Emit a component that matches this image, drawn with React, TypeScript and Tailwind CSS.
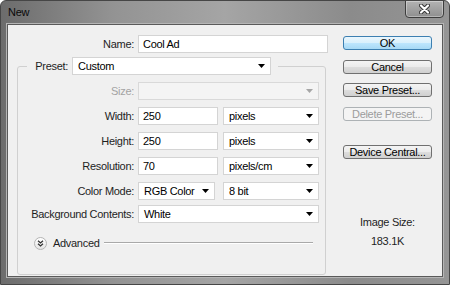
import React from "react";

const font = "font-['Liberation_Sans',Arial,sans-serif]";

function Arrow({ disabled }: { disabled?: boolean }) {
  return (
    <svg width="7" height="4" viewBox="0 0 7 4" className="shrink-0">
      <polygon points="0,0 7,0 3.5,4" fill={disabled ? "#a6a6a6" : "#000"} />
    </svg>
  );
}

function Select({ value, w, disabled }: { value?: string; w: string; disabled?: boolean }) {
  return (
    <div
      className={`${w} h-[18px] flex items-center justify-between pl-[5px] pr-[5px] border ${
        disabled ? "bg-[#f4f4f4] border-[#d9d9d9]" : "bg-white border-[#d4d4d4]"
      }`}
    >
      <span className="leading-none">{value}</span>
      <Arrow disabled={disabled} />
    </div>
  );
}

function Input({ value, w }: { value: string; w: string }) {
  return (
    <div className={`${w} h-[18px] flex items-center pl-[4px] bg-white border border-[#d4d4d4]`}>
      <span className="leading-none">{value}</span>
    </div>
  );
}

function Row({ label, disabled, children }: { label: string; disabled?: boolean; children: React.ReactNode }) {
  return (
    <div className="flex items-center gap-[4px]">
      <span className={`w-[116px] text-right ${disabled ? "text-[#a3a3a3]" : "text-[#1e1e1e]"}`}>{label}</span>
      {children}
    </div>
  );
}

function Btn({ children, primary, disabled }: { children: React.ReactNode; primary?: boolean; disabled?: boolean }) {
  let cls = "border-[#707070] bg-[linear-gradient(#f4f4f4,#ebebeb_50%,#dddddd_51%,#d0d0d0)] text-black";
  if (primary) cls = "border-[#3c7fb1] bg-[linear-gradient(#eaf6fd,#d9f0fc_50%,#bee6fd_51%,#a7d9f5)] text-black";
  if (disabled) cls = "border-[#adb2b5] bg-[#f4f4f4] text-[#9c9c9c]";
  return (
    <div className={`w-[89px] h-[14px] flex items-center justify-center rounded-[3px] border ${cls}`}>
      <span className="leading-none">{children}</span>
    </div>
  );
}

export default function App() {
  return (
    <div
      className={`${font} w-[450px] h-[285px] flex flex-col overflow-hidden border border-[#464646] rounded-t-[6px] bg-[linear-gradient(90deg,#6c6c6c_0%,#939393_25%,#a5a5a5_50%,#8b8b8b_78%,#959595_100%)] text-[11px] tracking-[-0.3px] text-black`}
    >
      <div className="h-[23px] shrink-0 flex items-start justify-between pl-[7px] pr-[5px]">
        <span className="mt-[6px] leading-none text-[11px] text-[#0a0a0a]">New</span>
        <div className="-mt-px w-[39px] h-[18px] flex items-center justify-center rounded-b-[4px] border border-[#3d3d3d] bg-[linear-gradient(#b3b3b3,#8f8f8f)] shadow-[inset_0_0_0_1px_rgba(255,255,255,0.35)]">
          <svg width="11" height="10" viewBox="0 0 11 10">
            <path d="M2 1.5 L9 8.5 M9 1.5 L2 8.5" stroke="#333" strokeWidth="4" strokeLinecap="round" />
            <path d="M2 1.5 L9 8.5 M9 1.5 L2 8.5" stroke="#fff" strokeWidth="2.2" strokeLinecap="round" />
          </svg>
        </div>
      </div>

      <div className="flex-1 mx-[6px] mb-[7px] border border-[#5a5a5a] bg-[#f0f0f0] flex shadow-[0_0_0_1px_#b5b5b5]">
        <div className="w-[335px] shrink-0 flex flex-col">
          <div className="mt-[10px] flex items-center gap-[4px]">
            <span className="w-[126px] text-right text-[#1e1e1e]">Name:</span>
            <Input value="Cool Ad" w="w-[190px] h-[17px]" />
          </div>

          <fieldset className="ml-[9px] mt-[4px] w-[309px] border border-[#d0d0d0] rounded-[3px] pb-[22px]">
            <legend className="ml-[9px] px-[7px] flex items-center gap-[4px]">
              <span className="w-[34px] text-right text-[#1e1e1e]">Preset:</span>
              <Select value="Custom" w="w-[199px]" />
            </legend>

            <div className="mt-[7px] flex flex-col gap-[7px]">
              <Row label="Size:" disabled>
                <Select w="w-[181px]" disabled />
              </Row>
              <Row label="Width:">
                <Input value="250" w="w-[80px]" />
                <div className="ml-[1px]"><Select value="pixels" w="w-[96px]" /></div>
              </Row>
              <Row label="Height:">
                <Input value="250" w="w-[80px]" />
                <div className="ml-[1px]"><Select value="pixels" w="w-[96px]" /></div>
              </Row>
              <Row label="Resolution:">
                <Input value="70" w="w-[80px]" />
                <div className="ml-[1px]"><Select value="pixels/cm" w="w-[96px]" /></div>
              </Row>
              <Row label="Color Mode:">
                <Select value="RGB Color" w="w-[77px]" />
                <div className="ml-[4px]"><Select value="8 bit" w="w-[96px]" /></div>
              </Row>
              <div className="-mt-[2px]">
                <Row label="Background Contents:">
                  <Select value="White" w="w-[181px]" />
                </Row>
              </div>
            </div>

            <div className="mt-[12px] ml-[16px] mr-[12px] flex items-center">
              <div className="w-[13px] h-[13px] rounded-full border border-[#b4b4b4] bg-[linear-gradient(#ffffff,#e4e4e4)] flex items-center justify-center">
                <svg width="7" height="7" viewBox="0 0 7 7">
                  <path d="M1 0.8 L3.5 3 L6 0.8 M1 3.8 L3.5 6 L6 3.8" fill="none" stroke="#333" strokeWidth="1.3" />
                </svg>
              </div>
              <span className="ml-[6px] text-[#1e1e1e]">Advanced</span>
              <div className="ml-[4px] flex-1 h-[2px] border-t border-[#a9a9a9] border-b border-b-white" />
            </div>
          </fieldset>
        </div>

        <div className="w-[89px] shrink-0 flex flex-col items-center">
          <div className="mt-[11px]"><Btn primary>OK</Btn></div>
          <div className="mt-[10px]"><Btn>Cancel</Btn></div>
          <div className="mt-[9px]"><Btn>Save Preset...</Btn></div>
          <div className="mt-[10px]"><Btn disabled>Delete Preset...</Btn></div>
          <div className="mt-[24px]"><Btn>Device Central...</Btn></div>
          <span className="mt-[57px] leading-[13px] text-[#1e1e1e]">Image Size:</span>
          <span className="mt-[6px] leading-[13px] text-[#1e1e1e]">183.1K</span>
        </div>
      </div>
    </div>
  );
}
